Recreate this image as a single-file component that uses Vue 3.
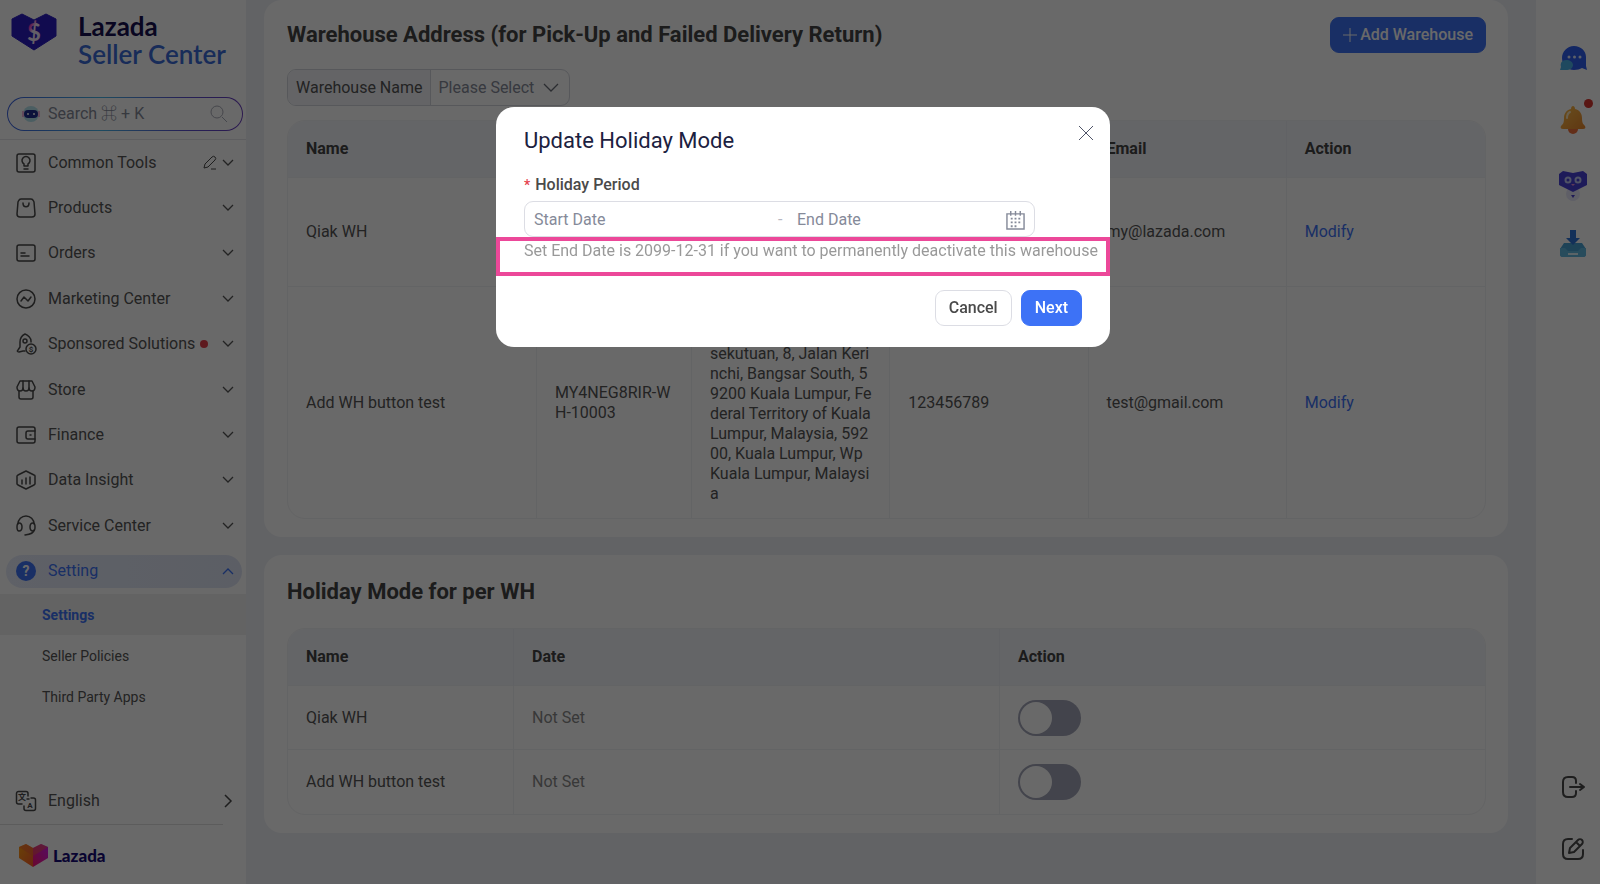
<template>
  <div class="page">
    <!-- Sidebar -->
    <aside class="sidebar">
      <a class="logo" href="#">
        <svg class="logo-mark" viewBox="0 0 46 36" aria-hidden="true">
          <path d="M1 5 11 0l12 6L35 0l10 5v17L23 36 1 22Z" fill="#2a1cc0" stroke="#2a1cc0" stroke-linejoin="round" />
          <text x="23" y="27" text-anchor="middle" font-family="Lato, sans-serif" font-size="24" font-weight="700" fill="url(#dollarFill)">$</text>
          <defs>
            <linearGradient id="dollarFill" x1="0" y1="0" x2="1" y2="1">
              <stop offset="0.25" stop-color="#e02fc0" />
              <stop offset="0.45" stop-color="#f1e6fa" />
            </linearGradient>
          </defs>
        </svg>
        <span class="logo-text">
          <span class="logo-name">Lazada</span>
          <span class="logo-sub">Seller Center</span>
        </span>
      </a>

      <label class="search">
        <svg class="search-bot" viewBox="0 0 18 18" aria-hidden="true">
          <circle cx="9" cy="9" r="8" fill="#b6e4ee" />
          <path d="M1 6v6M17 6v6" stroke="#f0b3dc" stroke-width="2" />
          <rect x="2" y="5" width="14" height="8" rx="4" fill="#1f2c8f" />
          <circle cx="6" cy="9" r="1" fill="#fff" />
          <circle cx="12" cy="9" r="1" fill="#fff" />
        </svg>
        <input v-model="search" type="text" placeholder="Search ⌘ + K" aria-label="Search" />
        <svg class="search-glass" viewBox="0 0 18 18" aria-hidden="true">
          <circle cx="7" cy="7" r="6" />
          <path d="m12 12 5 5" />
        </svg>
      </label>

      <nav class="menu">
        <ul class="menu-list">
          <li v-for="item in menu" :key="item.label">
            <a href="#" class="menu-item" :class="{ active: item.active }">
              <svg v-if="item.active" class="menu-icon" viewBox="0 0 20 20" aria-hidden="true">
                <circle cx="10" cy="10" r="10" fill="#3d72f6" stroke="none" />
                <text x="10" y="15" text-anchor="middle" font-family="Roboto, sans-serif" font-size="14" font-weight="700" fill="#fff">?</text>
              </svg>
              <svg v-else class="menu-icon" viewBox="0 0 20 20" aria-hidden="true">
                <path v-for="d in item.paths" :key="d" :d="d" />
                <text v-if="item.coin" x="15" y="18" text-anchor="middle" class="coin">$</text>
              </svg>
              <span>{{ item.label }}</span>
              <i v-if="item.dot" class="menu-dot"></i>
              <span class="menu-end">
                <svg v-if="item.editable" class="menu-pencil" viewBox="0 0 14 14" aria-hidden="true">
                  <path d="m1 12 1-4 7-7a2 2 0 0 1 3 3l-7 7ZM8 13h5" />
                </svg>
                <svg class="chevron" :class="{ up: item.active }" viewBox="0 0 12 8" aria-hidden="true">
                  <path d="m1 1 5 5 5-5" />
                </svg>
              </span>
            </a>
          </li>
        </ul>
        <ul class="submenu">
          <li v-for="(sub, i) in submenu" :key="sub">
            <a href="#" :class="{ current: i === 0 }">{{ sub }}</a>
          </li>
        </ul>
      </nav>

      <div class="side-foot">
        <button type="button" class="language">
          <svg class="menu-icon" viewBox="0 0 20 20" aria-hidden="true">
            <path d="M12 5V2.500a2 2 0 0 0-2-2H2.500a2 2 0 0 0-2 2V11a2 2 0 0 0 2 2H6" />
            <path d="M15 7h2.500a2 2 0 0 1 2 2v8.500a2 2 0 0 1-2 2H10a2 2 0 0 1-2-2V15M11 8h2" />
            <text x="6" y="9" text-anchor="middle" class="glyph">文</text>
            <text x="14" y="17" text-anchor="middle" class="glyph">A</text>
          </svg>
          <span>English</span>
          <svg class="chevron-right" viewBox="0 0 8 14" aria-hidden="true">
            <path d="m1 1 6 6-6 6" />
          </svg>
        </button>
        <a class="brand" href="#">
          <svg viewBox="0 0 29 23" aria-hidden="true">
            <path d="M0 3 7 0l7 4v19L0 14Z" fill="url(#heartLeft)" />
            <path d="m14 4 8-4 7 3v11l-15 9Z" fill="url(#heartRight)" />
            <path d="m0 3 7-3 7 4 8-4 7 3-15 9Z" fill="#f0603c" fill-opacity="0.5" />
            <defs>
              <linearGradient id="heartLeft" x1="0" y1="0" x2="1" y2="1">
                <stop offset="0" stop-color="#ffa012" />
                <stop offset="1" stop-color="#fb5a2a" />
              </linearGradient>
              <linearGradient id="heartRight" x1="1" y1="0" x2="0" y2="1">
                <stop offset="0" stop-color="#d01cf0" />
                <stop offset="1" stop-color="#ff1470" />
              </linearGradient>
            </defs>
          </svg>
          <span>Lazada</span>
        </a>
      </div>
    </aside>

    <!-- Main content -->
    <main class="content">
      <section class="card warehouse">
        <header class="card-head">
          <h2>Warehouse Address (for Pick-Up and Failed Delivery Return)</h2>
          <button type="button" class="btn primary add">
            <svg viewBox="0 0 14 14" aria-hidden="true"><path d="M7 0v14M0 7h14" /></svg>
            Add Warehouse
          </button>
        </header>

        <div class="filter">
          <label for="warehouseName">Warehouse Name</label>
          <div class="filter-select">
            <select id="warehouseName" v-model="selected">
              <option value="">Please Select</option>
              <option v-for="row in warehouses" :key="row.name" :value="row.name">{{ row.name }}</option>
            </select>
            <svg viewBox="0 0 14 9" aria-hidden="true"><path d="m0 1 7 7 7-7" /></svg>
          </div>
        </div>

        <div class="table-box">
          <table>
            <colgroup>
              <col class="col-name" />
              <col class="col-code" />
              <col span="4" />
            </colgroup>
            <thead>
              <tr>
                <th>Name</th>
                <th></th>
                <th></th>
                <th></th>
                <th>Email</th>
                <th>Action</th>
              </tr>
            </thead>
            <tbody>
              <tr v-for="row in warehouses" :key="row.name">
                <td>{{ row.name }}</td>
                <td class="break">{{ row.code }}</td>
                <td class="address">{{ row.address }}</td>
                <td>{{ row.phone }}</td>
                <td>{{ row.email }}</td>
                <td><a href="#">Modify</a></td>
              </tr>
            </tbody>
          </table>
        </div>
      </section>

      <section class="card holiday">
        <h2>Holiday Mode for per WH</h2>
        <div class="table-box">
          <table>
            <colgroup>
              <col class="col-wh" />
              <col class="col-date" />
              <col />
            </colgroup>
            <thead>
              <tr>
                <th>Name</th>
                <th>Date</th>
                <th>Action</th>
              </tr>
            </thead>
            <tbody>
              <tr v-for="row in holidays" :key="row.name">
                <td>{{ row.name }}</td>
                <td class="muted">Not Set</td>
                <td>
                  <input v-model="row.enabled" type="checkbox" class="switch" :aria-label="'Holiday mode for ' + row.name" />
                </td>
              </tr>
            </tbody>
          </table>
        </div>
      </section>
    </main>

    <!-- Right tool bar -->
    <aside class="tools">
      <button type="button" aria-label="Messages">
        <svg viewBox="0 0 28 28" aria-hidden="true">
          <path d="M15 2c7 0 12 5 12 11v9l1 4-5-2c-2 1-5 2-8 2C8 26 3 20 3 14S8 2 15 2Z" fill="#2f5ff0" />
          <path d="M7 16c4 0 7 2 7 5s-3 5-7 5H1l1-3c-1-4 1-7 5-7Z" fill="#4db2e6" />
          <g fill="#dfe9ff"><circle cx="10" cy="13" r="1.500" /><circle cx="15.500" cy="13" r="1.500" /><circle cx="21" cy="13" r="1.500" /></g>
        </svg>
      </button>
      <button type="button" aria-label="Notifications" class="bell">
        <svg viewBox="0 0 28 28" aria-hidden="true">
          <circle cx="14" cy="23" r="5" fill="#f0703c" />
          <path d="M14 0c1 0 2 1 2 3 5 1 7 5 7 9 0 5 1 6 3 8 1 2 0 3-2 3H4c-2 0-3-1-2-3 2-2 3-3 3-8 0-4 2-8 7-9 0-2 1-3 2-3Z" fill="url(#bellFill)" />
          <path d="M8 12c0-3 1-5 3-6" fill="none" stroke="#ffe9c0" stroke-width="2" stroke-linecap="round" />
          <defs>
            <linearGradient id="bellFill" x1="0" y1="0" x2="1" y2="1">
              <stop offset="0" stop-color="#ffc04a" />
              <stop offset="1" stop-color="#e8862c" />
            </linearGradient>
          </defs>
        </svg>
        <i></i>
      </button>
      <button type="button" aria-label="Assistant">
        <svg viewBox="0 -8 28 40" class="robot" aria-hidden="true">
          <circle cx="14" cy="24" r="7" fill="#dcdcf6" fill-opacity="0.7" />
          <path d="M0 4 4 1l10 2 10-2 4 3v11l-14 7L0 15Z" fill="#4a42d8" />
          <g fill="none" stroke="#c3caf4" stroke-width="2"><circle cx="9" cy="10" r="2.500" /><circle cx="19" cy="10" r="2.500" /></g>
          <path d="M12 14h4l-2 2Z" fill="#e68ad6" />
          <path d="M12 25h4l-2 3Z" fill="#4a3fd0" />
        </svg>
      </button>
      <button type="button" aria-label="Downloads">
        <svg viewBox="0 0 28 28" aria-hidden="true">
          <path d="M5 13h18l4 6v5a3 3 0 0 1-3 3H4a3 3 0 0 1-3-3v-5Z" fill="#4aa2d4" />
          <path d="M1 18h5l3 3h10l3-3h5v6a3 3 0 0 1-3 3H4a3 3 0 0 1-3-3Z" fill="#63b8e0" />
          <path d="M11 0h6v8h4l-7 7-7-7h4Z" fill="#2f76d8" />
          <path d="M9 24h10" stroke="#dcf2fb" stroke-width="2" />
        </svg>
      </button>
      <div class="tools-bottom">
        <button type="button" aria-label="Log out">
          <svg viewBox="0 0 24 24" class="line" aria-hidden="true">
            <path d="M15 8V6c0-3-1-4-4-4H7C4 2 2 4 2 7v10c0 3 2 5 5 5h4c3 0 4-1 4-4v-2M9 12h14m-4-3 4 3-4 3" />
          </svg>
        </button>
        <button type="button" aria-label="Feedback">
          <svg viewBox="0 0 24 24" class="line" aria-hidden="true">
            <path d="M11 2H7C4 2 2 4 2 7v10c0 3 2 5 5 5h10c3 0 5-2 5-5v-4M8 16l1-5 8-8c1-1 3-1 4 0s1 3 0 4l-8 8ZM15 5l4 4" />
          </svg>
        </button>
      </div>
    </aside>

    <!-- Holiday mode dialog -->
    <div class="mask">
      <form class="dialog" role="dialog" aria-labelledby="dialogTitle" @submit.prevent>
        <div class="dialog-head">
          <h3 id="dialogTitle">Update Holiday Mode</h3>
          <button type="button" class="close" aria-label="Close">
            <svg viewBox="0 0 14 14" aria-hidden="true"><path d="m0 0 14 14M14 0 0 14" /></svg>
          </button>
        </div>
        <label class="field-label" for="startDate"><span>*</span>Holiday Period</label>
        <div class="range">
          <input id="startDate" v-model="startDate" type="text" placeholder="Start Date" />
          <span class="dash">-</span>
          <input v-model="endDate" type="text" class="end" placeholder="End Date" aria-label="End Date" />
          <svg viewBox="0 0 20 20" aria-hidden="true">
            <path d="M1 3h18v16H1ZM5 0v5M10 0v5M15 0v5" />
            <path d="M5 8h2m2 0h2m2 0h2M5 12h2m2 0h2m2 0h2M5 16h2m2 0h2" stroke-width="2" />
          </svg>
        </div>
        <p class="hint">Set End Date is 2099-12-31 if you want to permanently deactivate this warehouse</p>
        <div class="dialog-foot">
          <button type="button" class="btn">Cancel</button>
          <button type="submit" class="btn primary">Next</button>
        </div>
      </form>
    </div>
  </div>
</template>

<script setup>
import { ref } from 'vue';

const search = ref('');
const selected = ref('');
const startDate = ref('');
const endDate = ref('');

const menu = [
  { label: 'Common Tools', editable: true, paths: ['M3 1h14a2 2 0 0 1 2 2v14a2 2 0 0 1-2 2H3a2 2 0 0 1-2-2V3a2 2 0 0 1 2-2Z', 'M8 13v-2a4 4 0 1 1 4 0v2ZM8 16h4'] },
  { label: 'Products', paths: ['M5 1h10c2 0 2 1 3 3l1 12c0 2-1 3-3 3H4c-2 0-3-1-3-3L2 4c1-2 1-3 3-3Z', 'M7 5c0 5 6 5 6 0'] },
  { label: 'Orders', paths: ['M3 2h14a2 2 0 0 1 2 2v12a2 2 0 0 1-2 2H3a2 2 0 0 1-2-2V4a2 2 0 0 1 2-2Z', 'M5 10h4M5 13h8'] },
  { label: 'Marketing Center', paths: ['M10 1a9 9 0 1 0 0 18 9 9 0 0 0 0-18Z', 'm5 12 3-4 4 4 3-4'] },
  { label: 'Sponsored Solutions', dot: true, coin: true, paths: ['M9 17H7l-4 1c-2 0-2-1-1-2l2-3V8c0-4 3-7 5-8 3 1 6 4 6 7v1', 'M9 5a2 2 0 1 0 0 4 2 2 0 0 0 0-4Z', 'M15 10a5 5 0 1 0 0 10 5 5 0 0 0 0-10Z'] },
  { label: 'Store', paths: ['M4 1h12l3 6c0 2-1 4-3 4s-3-1-3-3c0 4-6 4-6 0 0 2-1 3-3 3s-3-2-3-4Z', 'M7 1v7M13 1v7M3 11v6c0 1 1 2 2 2h10c1 0 2-1 2-2v-6'] },
  { label: 'Finance', paths: ['M19 6V4a2 2 0 0 0-2-2H3a2 2 0 0 0-2 2v12a2 2 0 0 0 2 2h14a2 2 0 0 0 2-2v-2', 'M19 6h-7a2 2 0 0 0-2 2v4a2 2 0 0 0 2 2h7ZM14 10h1'] },
  { label: 'Data Insight', paths: ['m10 1 8 4c1 0 1 1 1 1v8l-1 1-8 4-8-4-1-1V6l1-1Z', 'M6 10v4M10 8v6M14 7v7'] },
  { label: 'Service Center', paths: ['M2 8a8 8 0 0 1 16 0M18 14c0 3-3 4-9 5', 'M3 7c2 0 3 1 3 4s-1 4-3 4-2-2-2-4 0-4 2-4ZM17 7c-2 0-3 1-3 4s1 4 3 4 2-2 2-4 0-4-2-4Z'] },
  { label: 'Setting', active: true },
];

const submenu = ['Settings', 'Seller Policies', 'Third Party Apps'];

const warehouses = [
  {
    name: 'Qiak WH',
    code: '',
    address: '',
    phone: '',
    email: 'my@lazada.com',
  },
  {
    name: 'Add WH button test',
    code: 'MY4NEG8RIR-WH-10003',
    address: 'sekutuan, 8, Jalan Keri\nnchi, Bangsar South, 5\n9200 Kuala Lumpur, Fe\nderal Territory of Kuala\nLumpur, Malaysia, 592\n00, Kuala Lumpur, Wp\nKuala Lumpur, Malaysi\na',
    phone: '123456789',
    email: 'test@gmail.com',
  },
];

const holidays = ref([
  { name: 'Qiak WH', enabled: false },
  { name: 'Add WH button test', enabled: false },
]);
</script>

<style>
body {
  background: #eff1f6;
}
</style>

<style scoped>
* {
  box-sizing: border-box;
}

.page {
  display: flex;
  min-height: 100vh;
  font-family: Roboto, "Liberation Sans", "Noto Sans CJK SC", sans-serif;
  font-size: 16px;
  line-height: 20px;
  color: #555;
  background: #eff1f6;
}

a {
  color: #3d72f6;
  text-decoration: none;
}

ul {
  list-style: none;
  margin: 0;
  padding: 0;
}

h2,
h3,
p {
  margin: 0;
}

button,
input,
select {
  font: inherit;
  color: inherit;
}

svg {
  flex: none;
  overflow: visible;
}

/* sidebar */
.sidebar {
  display: flex;
  flex-direction: column;
  flex: none;
  width: 246px;
  background: #fff;
}

.logo {
  display: flex;
  align-items: flex-start;
  height: 97px;
  padding: 12px 0 0 11px;
}

.logo-mark {
  width: 46px;
  height: 36px;
  margin-top: 2px;
}

.logo-text {
  display: flex;
  flex-direction: column;
  margin-left: 21px;
  font-family: Lato, sans-serif;
  font-size: 26px;
  line-height: 28px;
  white-space: nowrap;
}

.logo-name {
  font-weight: 700;
  color: #161050;
}

.logo-sub {
  font-weight: 600;
  color: #3c6cd8;
}

.search {
  display: flex;
  align-items: center;
  height: 34px;
  margin: 0 3px 8px 7px;
  padding: 0 14px;
  border: 1px solid transparent;
  border-radius: 17px;
  background: linear-gradient(#fff, #fff) padding-box, linear-gradient(90deg, #3c62e0, #48b4e8 40%, #5b50d0 75%, #6a3cc0) border-box;
}

.search-bot {
  width: 18px;
  height: 18px;
}

.search input {
  flex: 1;
  min-width: 0;
  margin-left: 8px;
  padding: 0;
  border: 0;
  outline: 0;
  background: none;
}

.search input::placeholder {
  color: #858a99;
  opacity: 1;
}

.search-glass {
  width: 18px;
  height: 18px;
  fill: none;
  stroke: #a9acb8;
}

.menu {
  border-top: 1px solid #e4e4e8;
}

.menu-list {
  display: grid;
  grid-auto-rows: 1fr;
  height: 454px;
}

.menu-list li {
  display: flex;
  align-items: center;
  padding: 0 4px 0 6px;
}

.menu-item {
  display: flex;
  align-items: center;
  flex: 1;
  height: 33px;
  padding: 0 8px 0 10px;
  border-radius: 17px;
  color: #555;
}

.menu-item.active {
  color: #3d72f6;
  background: linear-gradient(90deg, #e6ebf9, #dfe5f5);
}

.menu-icon {
  width: 20px;
  height: 20px;
  margin-right: 12px;
  fill: none;
  stroke: #4a4a4a;
  stroke-width: 1.5;
  stroke-linecap: round;
  stroke-linejoin: round;
}

.menu-icon text {
  stroke: none;
}

.coin,
.glyph {
  font-family: Roboto, "Noto Sans CJK SC", sans-serif;
  font-size: 8px;
  font-weight: 700;
  fill: #4a4a4a;
}

.menu-dot {
  width: 8px;
  height: 8px;
  margin-left: 5px;
  border-radius: 50%;
  background: #e5404c;
}

.menu-end {
  display: flex;
  align-items: center;
  gap: 5px;
  margin-left: auto;
}

.menu-pencil {
  width: 14px;
  height: 14px;
  fill: none;
  stroke: #4a4a4a;
}

.chevron {
  width: 12px;
  height: 8px;
  fill: none;
  stroke: currentColor;
  stroke-width: 1.3;
}

.chevron.up {
  transform: rotate(180deg);
}

.submenu a {
  display: flex;
  align-items: center;
  height: 41px;
  padding-left: 42px;
  font-size: 14px;
  color: #555;
}

.submenu a.current {
  font-weight: 700;
  color: #3d72f6;
  background: #f1f1f1;
}

.side-foot {
  margin-top: auto;
}

.language {
  display: flex;
  align-items: center;
  width: 100%;
  height: 46px;
  padding: 0 14px 0 16px;
  border: 0;
  background: none;
}

.chevron-right {
  width: 8px;
  height: 14px;
  margin-left: auto;
  fill: none;
  stroke: #4a4a4a;
  stroke-width: 1.5;
}

.brand {
  display: flex;
  align-items: center;
  gap: 5px;
  height: 60px;
  margin-right: 23px;
  padding: 2px 0 0 19px;
  border-top: 1px solid #e0e0e0;
  font-family: Lato, sans-serif;
  font-size: 17px;
  font-weight: 900;
  color: #180c78;
}

.brand svg {
  width: 29px;
  height: 23px;
}

/* content */
.content {
  flex: 1;
  min-width: 0;
  padding: 0 28px 0 18px;
}

.card {
  padding: 17px 22px 18px 23px;
  border-radius: 18px;
  background: #fff;
}

.card + .card {
  margin-top: 18px;
  padding-top: 22px;
}

h2 {
  font-size: 22px;
  font-weight: 700;
  line-height: 30px;
  color: #444;
}

.holiday h2 {
  margin-bottom: 21px;
}

.card-head {
  display: flex;
  align-items: center;
  justify-content: space-between;
}

.btn {
  height: 36px;
  padding: 0 13px;
  border: 1px solid #dcdde4;
  border-radius: 9px;
  font-weight: 500;
  color: #4a4a4a;
  background: #fff;
}

.btn.primary {
  border-color: #3d72f6;
  color: #fff;
  background: #3d72f6;
}

.add {
  display: flex;
  align-items: center;
  gap: 3px;
  padding: 0 12px;
}

.add svg {
  width: 14px;
  height: 14px;
  stroke: #fff;
}

.filter {
  display: inline-flex;
  height: 37px;
  margin: 16px 0 14px;
  border: 1px solid #d4d6de;
  border-radius: 9px;
  vertical-align: top;
  overflow: hidden;
}

.filter label {
  display: flex;
  align-items: center;
  padding: 0 7px 0 8px;
  border-right: 1px solid #d4d6de;
  background: #f2f3f7;
}

.filter-select {
  display: flex;
  align-items: center;
  padding-right: 11px;
}

.filter-select select {
  width: 113px;
  height: 35px;
  padding: 0 0 0 8px;
  appearance: none;
  border: 0;
  outline: 0;
  color: #858a99;
  background: none;
}

.filter-select svg {
  width: 14px;
  height: 9px;
  fill: none;
  stroke: #6a6d78;
  stroke-width: 1.3;
}

.table-box {
  border: 1px solid #f1f2f4;
  border-radius: 18px;
  overflow: hidden;
}

table {
  width: 100%;
  table-layout: fixed;
  border-spacing: 0;
}

.col-name {
  width: 249px;
}

.col-code {
  width: 155px;
}

.col-wh {
  width: 226px;
}

.col-date {
  width: 486px;
}

th,
td {
  padding: 0 17px 0 18px;
  border-right: 1px solid #f1f2f4;
  border-bottom: 1px solid #f1f2f4;
  text-align: left;
  font-weight: 400;
}

th:last-child,
td:last-child {
  border-right: 0;
}

tr:last-child td {
  border-bottom: 0;
}

th {
  height: 57px;
  border-right-color: #eceff4;
  font-weight: 700;
  color: #444;
  background: #f2f5fa;
}

.warehouse td {
  height: 109px;
}

.warehouse tr:last-child td {
  height: 231px;
}

.holiday td {
  height: 64px;
}

.break {
  word-break: break-all;
}

.address {
  padding-top: 42px;
  white-space: pre;
}

.muted {
  color: #888;
}

.switch {
  display: block;
  width: 63px;
  height: 36px;
  margin: 0;
  padding: 2px;
  appearance: none;
  border-radius: 18px;
  background: #a3a6b8;
}

.switch::before {
  content: "";
  display: block;
  width: 32px;
  height: 32px;
  border-radius: 50%;
  background: #fff;
}

/* right tool bar */
.tools {
  display: flex;
  flex-direction: column;
  align-items: center;
  flex: none;
  width: 64px;
  padding: 44px 0 21px 9px;
  background: #fff;
}

.tools button {
  display: flex;
  align-items: center;
  justify-content: center;
  width: 28px;
  height: 28px;
  margin-bottom: 34px;
  padding: 0;
  border: 0;
  background: none;
}

.tools svg {
  width: 28px;
  height: 28px;
}

.tools svg.robot {
  height: 40px;
}

.tools svg.line {
  width: 24px;
  height: 24px;
  fill: none;
  stroke: #4a4a4a;
  stroke-width: 2;
  stroke-linecap: round;
  stroke-linejoin: round;
}

.bell {
  position: relative;
}

.bell i {
  position: absolute;
  top: -7px;
  right: -6px;
  width: 9px;
  height: 9px;
  border-radius: 50%;
  background: #d8362f;
}

.tools-bottom {
  margin-top: auto;
}

.tools-bottom button:last-child {
  margin-bottom: 0;
}

/* dialog */
.mask {
  position: fixed;
  inset: 0;
  display: flex;
  align-items: flex-start;
  justify-content: center;
  padding: 107px 0 0 6px;
  background: rgba(0, 0, 0, 0.59);
}

.dialog {
  width: 614px;
  padding: 18px 28px 21px;
  border-radius: 18px;
  background: #fff;
}

.dialog-head {
  display: flex;
  align-items: flex-start;
  justify-content: space-between;
}

h3 {
  font-size: 22px;
  font-weight: 400;
  line-height: 32px;
  color: #1c2140;
}

.close {
  display: flex;
  margin: 1px -11px 0 0;
  padding: 0;
  border: 0;
  background: none;
}

.close svg {
  width: 14px;
  height: 14px;
  stroke: #4f5468;
}

.field-label {
  display: block;
  margin: 18px 0 6px;
  font-weight: 500;
  color: #4a4a4a;
}

.field-label span {
  margin-right: 5px;
  font-size: 14px;
  color: #e5404c;
}

.range {
  display: flex;
  align-items: center;
  width: 511px;
  height: 36px;
  padding: 2px 9px 0;
  border: 1px solid #dcdde4;
  border-radius: 9px;
}

.range input {
  width: 236px;
  padding: 0;
  border: 0;
  outline: 0;
  background: none;
}

.range input.end {
  width: 180px;
}

.range svg {
  width: 19px;
  height: 19px;
  margin-left: auto;
  fill: none;
  stroke: #858a99;
  stroke-width: 1.5;
}

.range input::placeholder {
  color: #858a99;
  opacity: 1;
}

.dash {
  width: 11px;
  margin: 0 8px;
  color: #b6b8c2;
}

.hint {
  height: 39px;
  margin: 0 -28px;
  padding: 0 28px;
  outline: 4px solid #ec4899;
  outline-offset: -4px;
  line-height: 28px;
  color: #999;
  white-space: nowrap;
}

.dialog-foot {
  display: flex;
  justify-content: flex-end;
  gap: 9px;
  margin-top: 14px;
}
</style>
